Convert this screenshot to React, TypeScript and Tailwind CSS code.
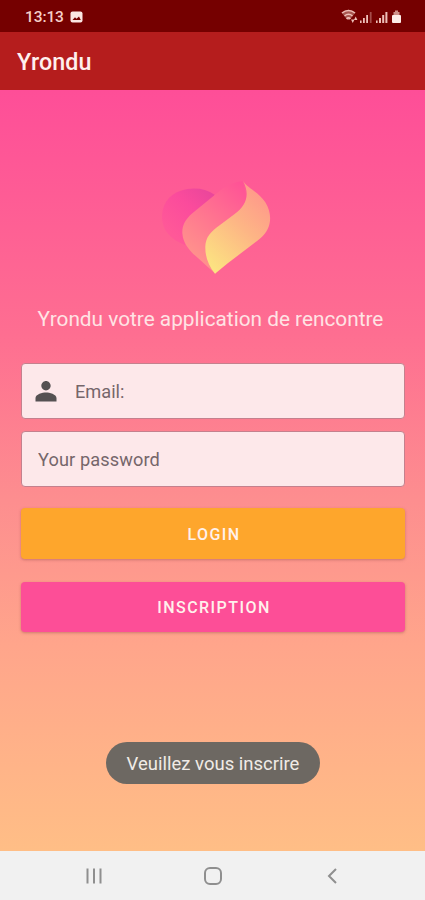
import { useState } from "react";
import { clsx } from "clsx";

function StatusBar() {
  return (
    <div className="flex h-8 shrink-0 items-center bg-[#750000] pl-[25px] pr-[22px] pt-[2px] text-[#f6cfc8]">
      <span className="w-[39px] pt-[2px] text-[15.5px] font-medium leading-none tracking-[-0.1px]">13:13</span>
      <svg className="ml-[6px]" width="13" height="12" viewBox="0 0 13 12">
        <rect x="0.5" y="0.5" width="12" height="11" rx="2" fill="#fbe6e2" />
        <path d="M2.5 9 L5 6.2 L6.5 7.8 L9 5.5 L10.8 9 Z" fill="#750000" />
      </svg>
      <svg className="ml-auto" width="62" height="16" viewBox="0 0 62 16">
        <path d="M0.5 3.5 Q7.5 -2 14.5 3.5 L8.5 11 h-2 Z" fill="#a8564f" />
        <g fill="none" stroke="#eebfb8" strokeWidth="1.5">
          <path d="M1 4 Q7.5 -0.8 14 4" />
          <path d="M3.5 7 Q7.5 3.6 11.5 7" />
          <path d="M5.5 9.8 Q7.5 8 9.5 9.8" />
        </g>
        <path d="M10 10.5 h3.5 l-1.75 3.5 Z M13 11 l1.7 -3.5 l1.7 3.5 Z" fill="#eebfb8" />
        <g fill="#eebfb8">
          <rect x="19" y="11.5" width="1.6" height="2.5" />
          <rect x="22" y="9" width="1.8" height="5" />
          <rect x="25.2" y="6" width="1.8" height="8" />
          <rect x="28.8" y="3" width="1.8" height="11" opacity="0.4" />
          <rect x="35" y="11.5" width="1.6" height="2.5" />
          <rect x="38" y="9" width="2" height="5" />
          <rect x="41.2" y="6" width="2" height="8" />
          <rect x="44.4" y="3" width="2" height="11" />
        </g>
        <path d="M52.5 3 h1.5 v-1.5 h3 v1.5 h1.5 v4 h-6 Z" fill="#cf8f88" />
        <rect x="51" y="6" width="9" height="8" rx="1" fill="#fdece8" />
      </svg>
    </div>
  );
}

function HeartLogo() {
  return (
    <svg className="ml-[129px] block" width="130" height="115" viewBox="0 0 390 345">
      <defs>
        <linearGradient id="lobe" x1="0.9" y1="0" x2="0.2" y2="0.8">
          <stop offset="0" stopColor="#e9469b" />
          <stop offset="0.45" stopColor="#fb4b9c" />
          <stop offset="1" stopColor="#ff5898" />
        </linearGradient>
        <linearGradient id="ribbon" x1="0.85" y1="0" x2="0.25" y2="1">
          <stop offset="0" stopColor="#ff5396" />
          <stop offset="0.45" stopColor="#ff7390" />
          <stop offset="1" stopColor="#ff998b" />
        </linearGradient>
        <linearGradient id="flame" x1="0.8" y1="0" x2="0.15" y2="1">
          <stop offset="0" stopColor="#ff948b" />
          <stop offset="0.45" stopColor="#fdb585" />
          <stop offset="1" stopColor="#fce581" />
        </linearGradient>
      </defs>
      <path d="M194 74 C165 54 127 51 92 62 C55 74 34 106 36 145 C38 181 60 207 104 225 L170 140 Z" fill="url(#lobe)" />
      <path d="M279 33 C251 35 227 48 205 66 L127 130 C104 150 96 169 97 190 C99 218 116 242 143 263 L196 311 L225 230 L292 100 Z" fill="url(#ribbon)" />
      <path d="M279 32 C292 55 326 65 346 97 C370 136 363 177 332 204 C290 238 241 272 195 311 C174 286 165 257 166 229 C167 202 182 184 211 164 L253 133 C291 105 300 73 279 32 Z" fill="url(#flame)" />
    </svg>
  );
}

const fieldClass =
  "flex items-center rounded-[4px] border border-[#c4808d] bg-[#fde8ea] text-[18.2px] text-[#75666a]";
const buttonClass =
  "rounded-[4px] pl-[2px] pt-[2px] text-[16px] font-medium leading-none tracking-[1.45px] text-[#fff1ec] shadow-[0_1px_3px_rgba(110,50,50,0.35)]";

export default function App() {
  const [email, setEmail] = useState("");
  const [password, setPassword] = useState("");

  return (
    <div className="flex h-[900px] w-[425px] flex-col overflow-hidden font-[Roboto,sans-serif]">
      <StatusBar />

      <header className="flex h-[58px] shrink-0 items-center bg-[#b51d1d] pl-[17px] pt-[4px]">
        <h1 className="text-[23.3px] font-medium leading-none tracking-[0.1px] text-[#fff0ee]">Yrondu</h1>
      </header>

      <main className="flex flex-1 flex-col bg-[linear-gradient(180deg,#fe4e98_0%,#fe6e91_32%,#fd8e8f_54%,#ffa58b_73%,#ffbe86_100%)] pl-[21px] pr-[20px] pt-[80px]">
        <HeartLogo />
        <p className="mt-[22px] pr-[5px] text-center text-[20.8px] leading-[25px] text-[#ffe3e4] whitespace-nowrap">
          Yrondu votre application de rencontre
        </p>

        <form className="mt-[31px] flex flex-col" onSubmit={(e) => e.preventDefault()}>
          <label className={clsx(fieldClass, "h-[56px]")}>
            <svg className="ml-[10px]" width="28" height="28" viewBox="0 0 24 24" fill="#555152">
              <path d="M12 11.5c2.2 0 4-1.7 4-3.9s-1.8-4.1-4-4.1-4 1.9-4 4.1 1.8 3.9 4 3.9zm0 1.7c-3 0-9 1.5-9 4.8V21h18v-3c0-3.3-6-4.8-9-4.8z" />
            </svg>
            <input
              className="ml-[15px] min-w-0 flex-1 bg-transparent pt-[2px] outline-none placeholder:text-[#75666a]"
              placeholder="Email:"
              value={email}
              onChange={(e) => setEmail(e.target.value)}
            />
          </label>
          <label className={clsx(fieldClass, "mt-[12px] h-[56px]")}>
            <input
              type="password"
              className="ml-[16px] min-w-0 flex-1 bg-transparent pt-px tracking-[0.1px] outline-none placeholder:text-[#75666a]"
              placeholder="Your password"
              value={password}
              onChange={(e) => setPassword(e.target.value)}
            />
          </label>
          <button type="submit" className={clsx(buttonClass, "mt-[21px] h-[51px] bg-[#fea62c]")}>
            LOGIN
          </button>
          <button type="button" className={clsx(buttonClass, "mt-[23px] h-[50px] bg-[#fd4e97]")}>
            INSCRIPTION
          </button>
        </form>

        {/* toast */}
        <div className="mt-auto mb-[67px] flex h-[42px] w-[214px] items-center justify-center self-center rounded-full bg-[#6d6862] pt-[3px] text-[18.5px] text-[#f0ebe6]">
          Veuillez vous inscrire
        </div>
      </main>

      <nav className="h-[49px] shrink-0 bg-[#f1f1f1]">
        <svg width="425" height="49" viewBox="0 0 425 49" fill="none" stroke="#8f8f8f" strokeWidth="2">
          <path d="M87.5 17.5v15M94 17.5v15M100.5 17.5v15" />
          <rect x="205" y="17" width="16" height="16" rx="5" />
          <path d="M336 18l-7 7 7 7" />
        </svg>
      </nav>
    </div>
  );
}
